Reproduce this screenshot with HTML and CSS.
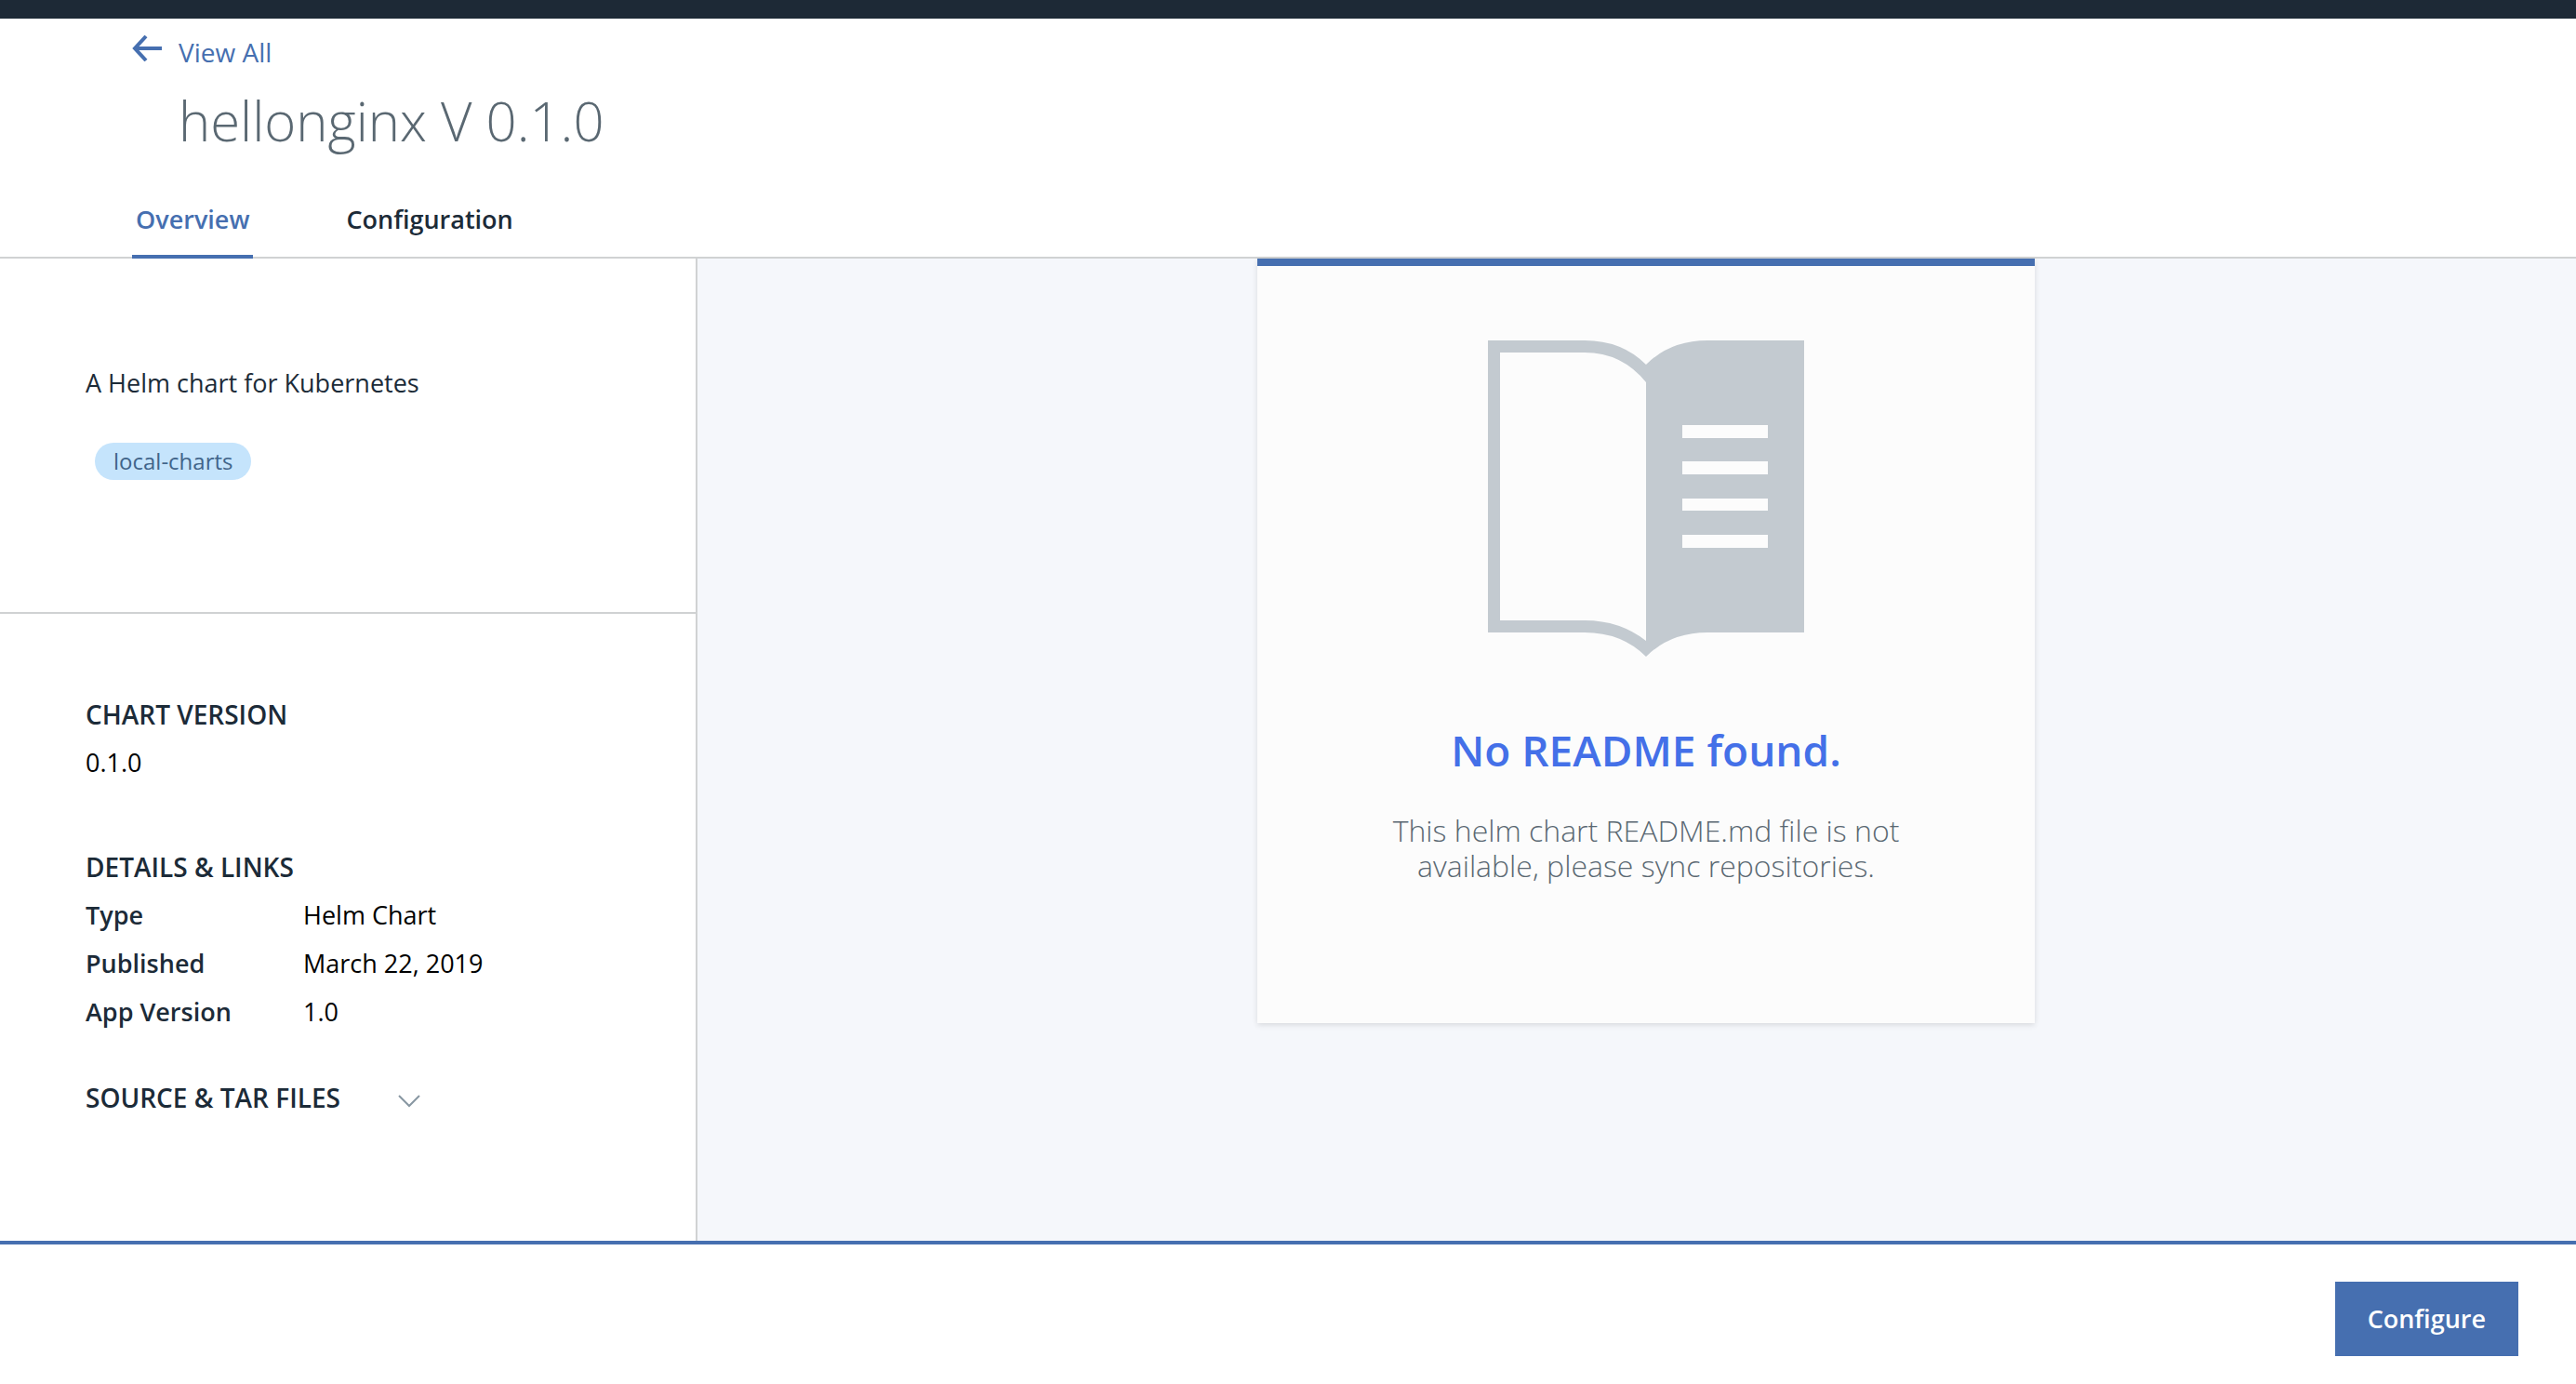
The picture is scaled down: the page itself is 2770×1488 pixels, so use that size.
FILE: index.html
```html
<!DOCTYPE html>
<html lang="en">
<head>
<meta charset="utf-8">
<meta name="viewport" content="width=device-width, initial-scale=1">
<title>hellonginx V 0.1.0</title>
<link rel="stylesheet" href="styles.css">
</head>
<body>
<div class="topbar"></div>
<header class="header">
  <a class="back" href="#">
    <svg class="back-icon" viewBox="0 0 32 28" aria-hidden="true"><path d="M32 14H3M15 1L3 14l12 13" fill="none" stroke="currentColor" stroke-width="4"/></svg>
    <span>View All</span>
  </a>
  <h1 class="title">hellonginx V 0.1.0</h1>
  <nav class="tabs">
    <a class="tab tab-active" href="#">Overview</a>
    <a class="tab" href="#">Configuration</a>
  </nav>
</header>
<div class="content">
  <aside class="sidebar">
    <section class="summary">
      <p class="description">A Helm chart for Kubernetes</p>
      <span class="tag">local-charts</span>
    </section>
    <section class="details">
      <h2 class="heading">CHART VERSION</h2>
      <p class="version">0.1.0</p>
      <h2 class="heading">DETAILS &amp; LINKS</h2>
      <dl class="facts">
        <dt>Type</dt><dd>Helm Chart</dd>
        <dt>Published</dt><dd>March 22, 2019</dd>
        <dt>App Version</dt><dd>1.0</dd>
      </dl>
      <button class="expand" type="button">
        <span class="heading">SOURCE &amp; TAR FILES</span>
        <svg class="chevron" viewBox="0 0 24 14" aria-hidden="true"><path d="M1 1l11 11L23 1" fill="none" stroke="currentColor" stroke-width="2"/></svg>
      </button>
    </section>
  </aside>
  <main class="readme">
    <div class="card">
      <svg class="book" viewBox="0 0 340 340" aria-hidden="true">
        <path fill="#c3cad0" fill-rule="evenodd" d="M0 0H104Q144 0 170 26Q196 0 236 0H340V314H236Q196 314 170 340Q144 314 104 314H0ZM13 13V301H104Q142 301 170 323V45Q144 13 104 13ZM209 91V105H301V91ZM209 130V144H301V130ZM209 170V183H301V170ZM209 209V223H301V209Z"/>
      </svg>
      <h2 class="card-title">No README found.</h2>
      <p class="card-text">This helm chart README.md file is not available, please sync repositories.</p>
    </div>
  </main>
</div>
<footer class="footer">
  <button class="configure" type="button">Configure</button>
</footer>
</body>
</html>
```

FILE: styles.css
```css
* {
  box-sizing: border-box;
  margin: 0;
  padding: 0;
}

body {
  display: flex;
  flex-direction: column;
  min-height: 100vh;
  background: #fff;
  color: #1c2b38;
  font: 400 27px/36px "Open Sans", "Noto Sans", sans-serif;
}

a {
  color: inherit;
  text-decoration: none;
}

button {
  border: 0;
  color: inherit;
  font: inherit;
  font-weight: 600;
  cursor: pointer;
}

.topbar {
  height: 20px;
  background: #1d2936;
}

.header {
  padding: 18px 142px 0;
  border-bottom: 2px solid #d0d2d3;
}

.back {
  display: inline-flex;
  gap: 18px;
  color: #466fb0;
  font-size: 28px;
}

.back-icon {
  width: 32px;
  height: 28px;
}

.title {
  margin: 18px 0 0 50px;
  color: #5a6872;
  font-size: 58px;
  font-weight: 300;
  line-height: 76px;
}

.tabs {
  display: flex;
  gap: 96px;
  margin: 50px 0 -2px;
}

.tab {
  padding: 0 4px 20px;
  border-bottom: 4px solid transparent;
  font-weight: 600;
}

.tab-active {
  border-bottom-color: #466fb0;
  color: #466fb0;
}

.content {
  display: grid;
  grid-template-columns: 75fr 202fr;
  flex: 1;
}

.sidebar {
  border-right: 2px solid #d0d2d3;
}

.summary {
  height: 382px;
  padding: 116px 92px 0;
  border-bottom: 2px solid #d0d2d3;
}

.tag {
  display: inline-block;
  margin: 46px 0 0 10px;
  padding: 0 20px;
  border-radius: 20px;
  background: #c5e4fc;
  color: #41648a;
  font-size: 24px;
  line-height: 40px;
}

.details {
  padding: 90px 92px 0;
}

.heading {
  font-size: 28px;
  font-weight: 600;
  line-height: 36px;
}

.version {
  margin: 16px 0 76px;
  color: #000;
}

.facts {
  display: grid;
  grid-template-columns: 234px 1fr;
  gap: 16px 0;
  margin: 16px 0 56px;
}

.facts dt {
  font-weight: 600;
}

.facts dd {
  color: #000;
}

.expand {
  display: flex;
  align-items: baseline;
  gap: 62px;
  background: none;
}

.chevron {
  width: 24px;
  height: 14px;
  color: #8897a2;
}

.readme {
  padding: 0 0 234px 20px;
  background: #f5f7fb;
}

.card {
  display: flex;
  flex-direction: column;
  align-items: center;
  max-width: 836px;
  margin: 0 auto;
  padding: 80px 128px 150px;
  border-top: 8px solid #466fb0;
  background: #fcfcfc;
  box-shadow: 0 2px 6px rgba(0, 0, 0, 0.12);
  text-align: center;
}

.book {
  width: 340px;
  height: 340px;
}

.card-title {
  margin: 66px 0 34px;
  color: #4470e8;
  font-size: 46px;
  font-weight: 600;
  line-height: 68px;
}

.card-text {
  color: #5a6872;
  font-size: 32px;
  font-weight: 300;
  line-height: 38px;
}

.footer {
  display: flex;
  justify-content: flex-end;
  padding: 40px 62px 30px;
  border-top: 4px solid #466fb0;
}

.configure {
  padding: 22px 35px;
  background: #466fb0;
  color: #fff;
}
```
